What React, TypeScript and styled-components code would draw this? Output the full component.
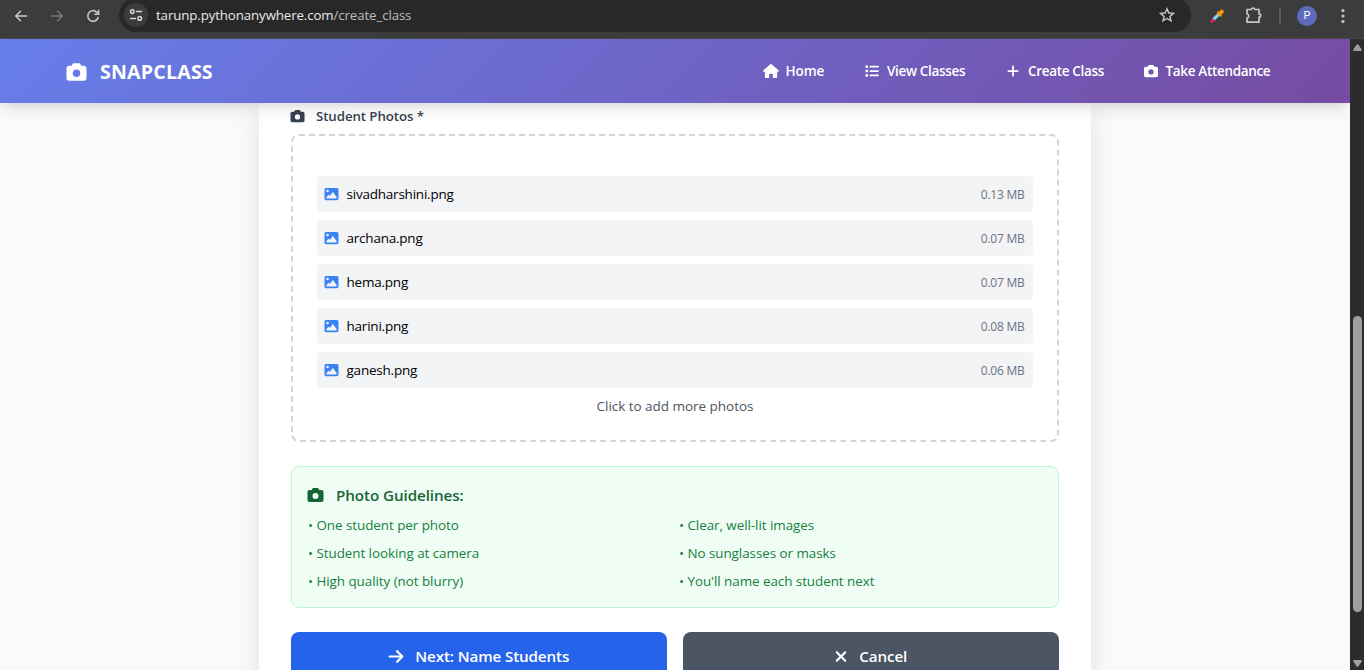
import React from "react";
import styled, { createGlobalStyle } from "styled-components";
import { FaCamera, FaHouse, FaList, FaPlus, FaImage, FaArrowRight, FaXmark } from "react-icons/fa6";

const GlobalStyle = createGlobalStyle`
  *, *::before, *::after { box-sizing: border-box; }
  html, body { margin: 0; padding: 0; overflow: hidden; }
  body { font-family: "Open Sans", "Noto Sans", sans-serif; color: #000; }
`;

const Window = styled.div`
  width: 1364px;
  height: 670px;
  display: flex;
  flex-direction: column;
  overflow: hidden;
  background: #f9fafb;
`;

const BrowserBar = styled.div`
  height: 39px;
  flex: none;
  display: flex;
  align-items: flex-start;
  background: #3c3c3c;
  border-bottom: 1px solid #484848;
  color: #c7c7c7;
  svg { display: block; flex: none; }
`;

const NavButtons = styled.div`
  width: 119px;
  height: 31px;
  padding-left: 13px;
  display: flex;
  align-items: center;
  gap: 20px;
`;

const AddressBar = styled.div`
  width: 1072px;
  height: 34px;
  margin-top: -2px;
  padding: 0 16px 0 5px;
  display: flex;
  align-items: center;
  border-radius: 17px;
  background: #282828;
`;

const SiteInfo = styled.div`
  width: 24px;
  height: 24px;
  margin-right: 8px;
  border-radius: 50%;
  display: grid;
  place-items: center;
  background: #3c3c3c;
`;

const Url = styled.div`
  flex: 1;
  padding-bottom: 1px;
  font-size: 13.3px;
  line-height: 20px;
  letter-spacing: -0.12px;
  color: #e8e8e8;
  span { color: #bdbdbd; }
`;

const Extensions = styled.div`
  height: 31px;
  flex: 1;
  display: flex;
  align-items: center;
  padding-left: 18px;
`;

const PuzzleIcon = styled.svg`
  margin-left: 20px;
`;

const Separator = styled.div`
  width: 2px;
  height: 16px;
  margin: 0 16px;
  background: #5c5c5c;
`;

const Avatar = styled.div`
  width: 20px;
  height: 20px;
  margin-right: 16px;
  border-radius: 50%;
  background: #5c6bc0;
  color: #fff;
  font: 11px/20px Roboto, sans-serif;
  text-align: center;
`;

const Viewport = styled.div`
  flex: 1;
  min-height: 0;
  display: flex;
`;

const Page = styled.div`
  width: 1350px;
  display: flex;
  flex-direction: column;
  overflow: hidden;
  background: #f9fafb;
`;

const Header = styled.header`
  height: 64px;
  flex: none;
  position: relative;
  z-index: 1;
  display: flex;
  align-items: center;
  justify-content: space-between;
  padding: 0 79.5px 0 65px;
  color: #fff;
  background: linear-gradient(135deg, #667eea 0%, #764ba2 100%);
  box-shadow: 0 10px 15px -3px rgba(0, 0, 0, 0.1), 0 4px 6px -2px rgba(0, 0, 0, 0.05);
`;

const Brand = styled.div`
  display: flex;
  align-items: center;
  gap: 12px;
  padding-top: 1px;
  font-size: 19.6px;
  font-weight: 700;
  letter-spacing: 0.18px;
  svg { width: 23px; height: 20px; }
`;

const Nav = styled.nav`
  display: flex;
  align-items: center;
`;

const NavLink = styled.a<{ $width: number; $spacing?: number }>`
  width: ${(p) => p.$width}px;
  display: flex;
  align-items: center;
  gap: 7px;
  font-size: 13.5px;
  line-height: 20px;
  font-weight: 650;
  letter-spacing: ${(p) => p.$spacing ?? -0.33}px;
  white-space: nowrap;
  svg { width: 16px; height: 14px; flex: none; }
`;

const Card = styled.main`
  width: 832px;
  height: 640px;
  flex: none;
  align-self: center;
  padding: 3px 32px 0;
  background: #fff;
  box-shadow: 0 10px 25px rgba(0, 0, 0, 0.1);
`;

const FieldLabel = styled.div`
  display: flex;
  align-items: center;
  gap: 11px;
  height: 20px;
  margin: 0 0 8px -1px;
  font-size: 13.3px;
  font-weight: 600;
  letter-spacing: -0.1px;
  color: #374151;
  svg { width: 15px; height: 14px; }
`;

const DropZone = styled.div`
  height: 308px;
  padding: 40px 24px 0;
  border: 2px dashed #d1d5db;
  border-radius: 8px;
`;

const FileList = styled.div`
  display: flex;
  flex-direction: column;
  gap: 8px;
`;

const FileRow = styled.div`
  height: 36px;
  padding: 0 8.5px 0 7px;
  display: flex;
  align-items: center;
  border-radius: 4px;
  background: #f3f4f6;
  svg { width: 15px; height: 14px; margin-bottom: 1px; color: #3b82f6; }
`;

const FileName = styled.span`
  flex: 1;
  margin-left: 7.5px;
  font-size: 13.5px;
  line-height: 20px;
  letter-spacing: -0.22px;
`;

const FileSize = styled.span`
  padding-top: 1px;
  font-size: 12px;
  line-height: 16px;
  letter-spacing: -0.25px;
  color: #6b7280;
`;

const Hint = styled.div`
  margin-top: 8px;
  font-size: 13.5px;
  line-height: 20px;
  letter-spacing: -0.03px;
  text-align: center;
  color: #4b5563;
`;

const Guidelines = styled.section`
  height: 142px;
  margin: 24px 0;
  padding: 16px;
  border: 1px solid #bbf7d0;
  border-radius: 8px;
  background: #f0fdf4;
`;

const GuidelinesTitle = styled.div`
  display: flex;
  align-items: center;
  gap: 12px;
  height: 24px;
  margin: 0 0 8px -1px;
  font-size: 15.2px;
  font-weight: 600;
  letter-spacing: -0.08px;
  color: #166534;
  svg { width: 17px; height: 16px; }
`;

const GuidelineGrid = styled.div`
  display: grid;
  grid-template-columns: 1fr 1fr;
  gap: 8px;
  font-size: 13.4px;
  line-height: 20px;
  letter-spacing: -0.04px;
  color: #15803d;
`;

const Actions = styled.div`
  display: flex;
  gap: 16px;
`;

const ActionButton = styled.button<{ $color: string; $icon: number }>`
  flex: 1;
  height: 48px;
  border: 0;
  padding: 0 1px 0 0;
  display: flex;
  align-items: center;
  justify-content: center;
  gap: 11.5px;
  border-radius: 8px;
  background: ${(p) => p.$color};
  color: #fff;
  font-family: inherit;
  font-size: 15.2px;
  font-weight: 600;
  letter-spacing: -0.13px;
  svg { width: ${(p) => p.$icon}px; height: 17px; }
`;

const ScrollTrack = styled.div`
  width: 14px;
  display: flex;
  flex-direction: column;
  align-items: center;
  background: #2c2c2c;
  padding: 5px 0 3px 1px;
  svg { display: block; flex: none; }
`;

const ScrollThumb = styled.div`
  width: 9px;
  height: 296px;
  margin: 265px 0 auto;
  border-radius: 5px;
  background: #9f9f9f;
`;

const files = [
  ["sivadharshini.png", "0.13 MB"],
  ["archana.png", "0.07 MB"],
  ["hema.png", "0.07 MB"],
  ["harini.png", "0.08 MB"],
  ["ganesh.png", "0.06 MB"],
];

const guidelines = [
  "One student per photo",
  "Clear, well-lit images",
  "Student looking at camera",
  "No sunglasses or masks",
  "High quality (not blurry)",
  "You'll name each student next",
];

export default function App() {
  return (
    <>
      <GlobalStyle />
      <Window>
        <BrowserBar>
          <NavButtons>
            <svg width="16" height="16" viewBox="0 0 16 16" fill="none" stroke="#c7c7c7" strokeWidth="1.6">
              <path d="M14 8H3M8 2.8 2.8 8 8 13.2" />
            </svg>
            <svg width="16" height="16" viewBox="0 0 16 16" fill="none" stroke="#757575" strokeWidth="1.6">
              <path d="M2 8h11M8 2.8 13.2 8 8 13.2" />
            </svg>
            <svg width="16" height="16" viewBox="0 0 16 16" fill="none" stroke="#c7c7c7" strokeWidth="1.6">
              <path d="M13.3 8.8a5.3 5.3 0 1 1-1.5-4.6L13.4 6M13.6 1.8V6.2H9.2" />
            </svg>
          </NavButtons>
          <AddressBar>
            <SiteInfo>
              <svg width="14" height="14" viewBox="0 0 14 14" fill="none" stroke="#d6d6d6" strokeWidth="1.5">
                <circle cx="3.3" cy="3.6" r="1.8" />
                <path d="M7 3.6h6M1 10.4h6" />
                <circle cx="10.7" cy="10.4" r="1.8" />
              </svg>
            </SiteInfo>
            <Url>tarunp.pythonanywhere.com<span>/create_class</span></Url>
            <svg width="16" height="16" viewBox="0 0 16 16" fill="none" stroke="#c7c7c7" strokeWidth="1.4">
              <path d="m8 1.800 1.800 4.200 4.600.4-3.500 3 1.100 4.500L8 11.500l-4 2.400 1.100-4.500-3.500-3L6.200 6z" />
            </svg>
          </AddressBar>
          <Extensions>
            <svg width="16" height="16" viewBox="0 0 16 16">
              <path d="M3.200 10.600 8.600 5.200l2.200 2.200-5.400 5.400z" fill="#81d4fa" />
              <path d="m3.600 9.900 2.500 2.500-1.700 1.500-2.600 1.200-.7-.7 1.100-2.600z" fill="#e91e63" />
              <path d="m7.400 4.700 1.300-1.300 1 .6 1.500-1.800a2.100 2.100 0 0 1 3 3l-1.900 1.600.6 1-1.300 1.200z" fill="#ff9800" />
            </svg>
            <PuzzleIcon width="18" height="18" viewBox="0 0 18 18" fill="none" stroke="#c7c7c7" strokeWidth="1.7" strokeLinejoin="round">
              <path d="M2 2.500h4.400a1.700 1.500 0 0 1 3.400 0H14v4.300a1.700 1.700 0 0 1 0 3.400V15.200H2v-4.100a2.200 2.200 0 0 0 0-4.300z" />
            </PuzzleIcon>
            <Separator />
            <Avatar>P</Avatar>
            <svg width="20" height="18" viewBox="0 0 20 18" fill="#c7c7c7">
              <circle cx="10" cy="3.500" r="1.600" />
              <circle cx="10" cy="9" r="1.600" />
              <circle cx="10" cy="14.500" r="1.600" />
            </svg>
          </Extensions>
        </BrowserBar>
        <Viewport>
          <Page>
            <Header>
              <Brand><FaCamera />SNAPCLASS</Brand>
              <Nav>
                <NavLink $width={101.5} $spacing={-0.1}><FaHouse />Home</NavLink>
                <NavLink $width={141}><FaList />View Classes</NavLink>
                <NavLink $width={137.5}><FaPlus />Create Class</NavLink>
                <NavLink $width={128}><FaCamera />Take Attendance</NavLink>
              </Nav>
            </Header>
            <Card>
              <FieldLabel><FaCamera />Student Photos *</FieldLabel>
              <DropZone>
                <FileList>
                  {files.map(([name, size]) => (
                    <FileRow key={name}>
                      <FaImage />
                      <FileName>{name}</FileName>
                      <FileSize>{size}</FileSize>
                    </FileRow>
                  ))}
                </FileList>
                <Hint>Click to add more photos</Hint>
              </DropZone>
              <Guidelines>
                <GuidelinesTitle><FaCamera />Photo Guidelines:</GuidelinesTitle>
                <GuidelineGrid>
                  {guidelines.map((text) => <div key={text}>• {text}</div>)}
                </GuidelineGrid>
              </Guidelines>
              <Actions>
                <ActionButton $color="#2563eb" $icon={16}><FaArrowRight />Next: Name Students</ActionButton>
                <ActionButton $color="#4b5563" $icon={14}><FaXmark />Cancel</ActionButton>
              </Actions>
            </Card>
          </Page>
          <ScrollTrack>
            <svg width="9" height="7" viewBox="0 0 9 7" fill="#9f9f9f"><path d="M3.500.8Q4.500-.4 5.500.8L8.700 5.500Q9 7 8 7H1Q0 7 .3 5.500z" /></svg>
            <ScrollThumb />
            <svg width="9" height="7" viewBox="0 0 9 7" fill="#9f9f9f"><path d="M3.500 6.200Q4.500 7.400 5.500 6.200L8.700 1.500Q9 0 8 0H1Q0 0 .3 1.500z" /></svg>
          </ScrollTrack>
        </Viewport>
      </Window>
    </>
  );
}
